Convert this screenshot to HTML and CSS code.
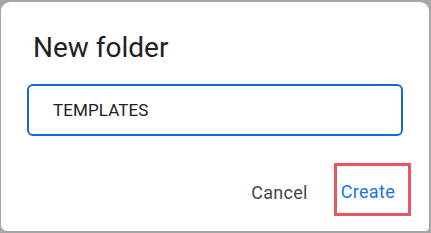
FILE: index.html
```html
<!DOCTYPE html>
<html lang="en">
<head>
    <meta charset="UTF-8">
    <meta name="viewport" content="width=device-width, initial-scale=1.0">
    <title>New folder</title>
    <link rel="stylesheet" href="styles.css">
</head>
<body>
    <div class="dialog">
        <h2 class="dialog-title">New folder</h2>

        <div class="name-field">
            <span class="name-value">TEMPLATES</span>
        </div>

        <div class="dialog-actions">
            <button class="action-btn cancel-btn">Cancel</button>
            <button class="action-btn create-btn">Create</button>
        </div>
    </div>
</body>
</html>
```

FILE: styles.css
```css
:root {
    --frame: #a3a7a7;
    --text: #202124;
    --muted: #444746;
    --accent: #1a73e8;
    --field-border: #1967d2;
    --highlight: #ea5560;
}

* {
    margin: 0;
    padding: 0;
    box-sizing: border-box;
}

body {
    background-color: var(--frame);
    width: 431px;
    height: 233px;
    padding: 2px 2px 2px 1px;
    font-family: Roboto, 'Liberation Sans', Arial, sans-serif;
}

.dialog {
    background: white;
    height: 229px;
    border-radius: 9px 9px 4px 6px;
    padding: 28px 18px 0 26px;
}

.dialog-title {
    color: var(--text);
    font-size: 28px;
    font-weight: 400;
    line-height: 36px;
    padding-left: 6px;
}

.name-field {
    margin-top: 18px;
    margin-right: 8px;
    height: 52px;
    border: 2px solid var(--field-border);
    border-radius: 6px;
    display: flex;
    align-items: center;
    padding-left: 24px;
}

.name-value {
    color: var(--text);
    font-size: 17px;
    letter-spacing: 0.1px;
}

.dialog-actions {
    margin-top: 27px;
    display: flex;
    justify-content: flex-end;
    align-items: center;
    gap: 26px;
}

.action-btn {
    background: none;
    border: none;
    font-family: Roboto, 'Liberation Sans', Arial, sans-serif;
    font-size: 18px;
    font-weight: 400;
    letter-spacing: 0.3px;
    cursor: pointer;
}

.cancel-btn {
    color: var(--muted);
    margin-top: 5px;
}

.create-btn {
    color: var(--accent);
    height: 53px;
    border: 3px solid var(--highlight);
    padding: 4px 13px 0 4px;
}
```
